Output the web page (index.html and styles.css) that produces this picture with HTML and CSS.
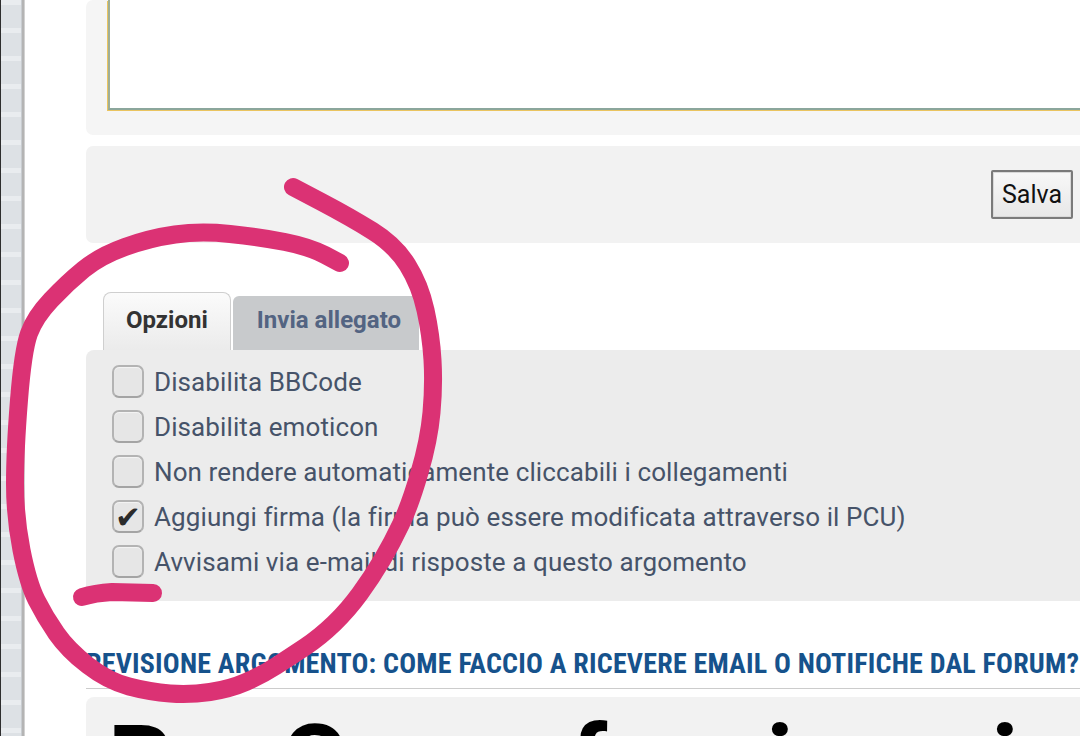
FILE: index.html
```html
<!DOCTYPE html>
<html lang="it">
<head>
<meta charset="utf-8">
<title>Rispondi</title>
<link rel="stylesheet" href="styles.css">
</head>
<body>
<div class="screen">
  <div class="edge"></div>
  <main class="content">
    <section class="panel panel-editor">
      <textarea class="editor" aria-label="Messaggio"></textarea>
    </section>
    <section class="panel panel-submit">
      <button class="btn-save" type="button">Salva</button>
    </section>
    <nav class="tabs">
      <span class="tab tab-active">Opzioni</span>
      <span class="tab">Invia allegato</span>
    </nav>
    <section class="panel panel-options">
      <label class="opt"><span class="box"></span>Disabilita BBCode</label>
      <label class="opt"><span class="box"></span>Disabilita emoticon</label>
      <label class="opt"><span class="box"></span>Non rendere automaticamente cliccabili i collegamenti</label>
      <label class="opt"><span class="box checked">&#10004;</span>Aggiungi firma (la firma può essere modificata attraverso il PCU)</label>
      <label class="opt"><span class="box"></span>Avvisami via e-mail di risposte a questo argomento</label>
    </section>
    <h3 class="review-title">REVISIONE ARGOMENTO: COME FACCIO A RICEVERE EMAIL O NOTIFICHE DAL FORUM?</h3>
    <section class="panel panel-post">
      <h2 class="post-title">Re: Come faccio a ricevere email o notifiche dal forum?</h2>
    </section>
  </main>
  <svg class="scribble" width="1080" height="736" viewBox="0 0 1080 736" aria-hidden="true">
    <path class="ink" d="M293,187 L321.5,202 Q350,217 372.5,231 Q395,245 407.5,265 Q420,285 425.5,310 Q431,335 432.5,360 Q434,385 431.5,412.5 Q429,440 419.5,472.5 Q410,505 401,524 Q392,543 382,560 Q372,577 360,593.5 Q348,610 334,623.5 Q320,637 305,647 Q290,657 276,666 Q262,675 246,682 Q230,689 210,692 Q190,695 170,693.5 Q150,692 129,686.5 Q108,681 88,665.5 Q68,650 56.5,633.5 Q45,617 36.5,600 Q28,583 21.5,550 Q15,517 15,483.5 Q15,450 19,400 Q23,350 29,333.5 Q35,317 51,300 Q67,283 83.5,269.5 Q100,256 125,247 Q150,238 175,234.5 Q200,231 230,234 Q260,237 285,242 Q310,247 325,255 L340,263"/>
    <path class="ink" d="M82,597 Q95,593 112,592 L153,593"/>
  </svg>
</div>
</body>
</html>
```
FILE: styles.css
```css
* { box-sizing: border-box; }

html, body {
  margin: 0;
  padding: 0;
  background: #ffffff;
}

body {
  width: 1080px;
  height: 736px;
  overflow: hidden;
  font-family: Roboto, "Noto Sans", "Liberation Sans", sans-serif;
}

.screen {
  position: relative;
  display: flex;
  width: 1080px;
  height: 736px;
  overflow: hidden;
}

.edge {
  flex: none;
  width: 25px;
  height: 100%;
  background:
    linear-gradient(to right, #2e2e2e 0 1px, transparent 1px 21px, #c8ccd0 21px 22px, #b4b4b4 22px 24px, #d2d2d2 24px 25px),
    repeating-linear-gradient(to bottom, #e9ecef 0 5px, #dde1e5 5px 28px);
}

.content {
  flex: none;
  width: 1095px;
  padding-left: 61px;
}

.panel {
  border-radius: 7px 0 0 7px;
}

.panel-editor {
  height: 135px;
  padding: 0 0 25px 22px;
  background: #f5f5f5;
}

.editor {
  display: block;
  width: 100%;
  height: 110px;
  margin: 0;
  padding: 0;
  resize: none;
  background: #ffffff;
  border: 0;
  border-left: 2px solid #9fae96;
  border-bottom: 2px solid #8ba69c;
  box-shadow: -1px 1px 0 #eac45f;
  outline: none;
}

.panel-submit {
  display: flex;
  align-items: center;
  justify-content: flex-end;
  height: 97px;
  margin-top: 11px;
  padding-right: 47px;
  background: #f2f2f2;
}

.btn-save {
  width: 82px;
  height: 49px;
  padding: 0;
  border: 2px solid #7a7a7a;
  border-radius: 2px;
  background: linear-gradient(#f8f8f8, #e7e7e7);
  box-shadow: inset 0 0 0 1px #d9d9d9;
  font-family: Roboto, "Noto Sans", sans-serif;
  font-size: 25px;
  color: #111111;
}

.tabs {
  display: flex;
  align-items: flex-end;
  gap: 2px;
  height: 58px;
  margin-top: 49px;
  padding-left: 17px;
}

.tab {
  padding: 10px 18px 16px 24px;
  border-radius: 6px 6px 0 0;
  background: #c8cacc;
  color: #536482;
  font-size: 24px;
  font-weight: 700;
  line-height: 28px;
  white-space: nowrap;
}

.tab-active {
  padding: 13px 22px 16px 22px;
  border: 1px solid #cfcfcf;
  border-bottom: 0;
  border-radius: 8px 8px 0 0;
  background: linear-gradient(#fbfbfb, #ebebeb);
  color: #333333;
}

.panel-options {
  height: 251px;
  padding: 9px 0 17px 26px;
  background: #ececec;
  border-radius: 8px 0 0 3px;
}

.opt {
  display: flex;
  align-items: center;
  height: 45px;
  font-size: 26px;
  letter-spacing: 0.1px;
  color: #465369;
  white-space: nowrap;
}

.box {
  display: flex;
  align-items: center;
  justify-content: center;
  flex: none;
  width: 32px;
  height: 33px;
  margin-right: 10px;
  border: 2px solid #b3b3b3;
  border-bottom-color: #a4a4a4;
  border-radius: 7px;
  background: #e6e6e6;
  box-shadow: inset 0 1px 1px #f4f4f4;
}

.box.checked {
  padding-top: 1px;
  font-family: "DejaVu Sans", sans-serif;
  font-size: 31px;
  line-height: 1;
  color: #2b2b2b;
}

.review-title {
  margin: 48px 0 0;
  padding-bottom: 9px;
  border-bottom: 1px solid #cccccc;
  font-size: 28px;
  font-weight: 700;
  line-height: 30px;
  letter-spacing: 0.2px;
  color: #16528c;
  white-space: nowrap;
  font-stretch: semi-condensed;
}

.panel-post {
  height: 120px;
  margin-top: 8px;
  padding: 15px 0 0 22px;
  background: #f2f2f2;
  border-radius: 8px 0 0 0;
  overflow: hidden;
}

.post-title {
  margin: 0;
  font-size: 101px;
  font-weight: 700;
  line-height: 100px;
  color: #000000;
  white-space: nowrap;
}

.scribble {
  position: absolute;
  top: 0;
  left: 0;
  pointer-events: none;
}

.ink {
  fill: none;
  stroke: #db3274;
  stroke-width: 18;
  stroke-linecap: round;
  stroke-linejoin: round;
}
```
